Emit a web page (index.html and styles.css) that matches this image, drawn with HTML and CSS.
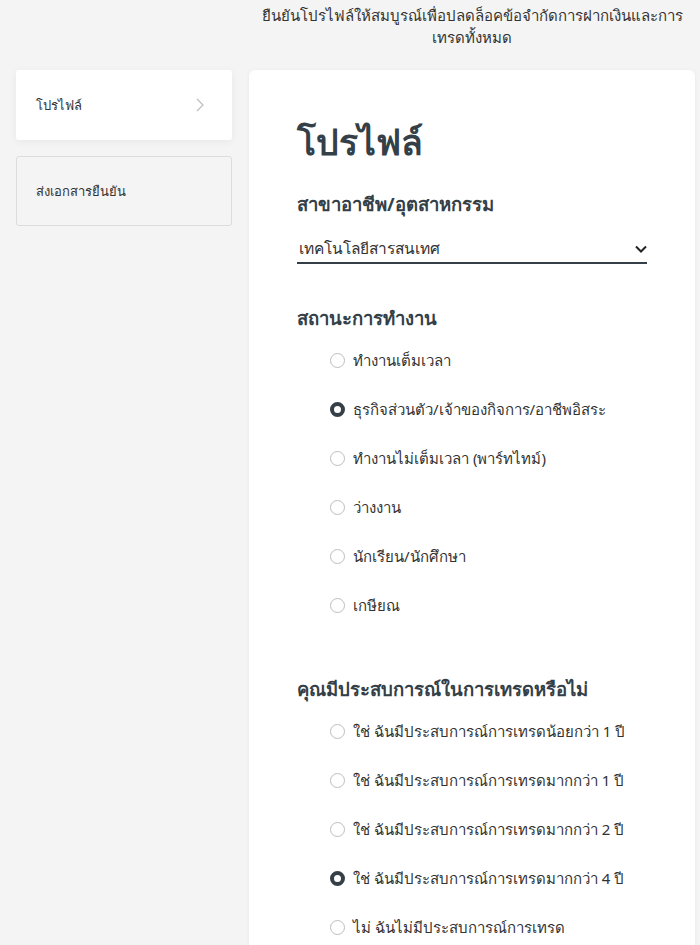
FILE: index.html
```html
<!DOCTYPE html>
<html lang="th">
<head>
<meta charset="utf-8">
<link rel="stylesheet" href="styles.css">
</head>
<body>
<div class="page">
  <div class="top">
    <div class="top-spacer"></div>
    <p class="intro">ยืนยันโปรไฟล์ให้สมบูรณ์เพื่อปลดล็อคข้อจำกัดการฝากเงินและการเทรดทั้งหมด</p>
  </div>
  <div class="layout">
    <nav class="side">
      <div class="side-item active">
        <span>โปรไฟล์</span>
        <svg class="chev" width="8" height="14" viewBox="0 0 8 14"><path d="M1 1l6 6-6 6" fill="none" stroke="#bdbdbd" stroke-width="1.2"/></svg>
      </div>
      <div class="side-item plain"><span>ส่งเอกสารยืนยัน</span></div>
    </nav>
    <main class="card">
      <h1 class="title">โปรไฟล์</h1>
      <h2 class="label">สาขาอาชีพ/อุตสาหกรรม</h2>
      <div class="select">
        <span>เทคโนโลยีสารสนเทศ</span>
        <svg width="12" height="8" viewBox="0 0 12 8"><path d="M1 1.5l5 5 5-5" fill="none" stroke="#222" stroke-width="2"/></svg>
      </div>
      <h2 class="label l2">สถานะการทำงาน</h2>
      <div class="radios">
        <div class="radio"><span class="dot"></span>ทำงานเต็มเวลา</div>
        <div class="radio"><span class="dot on"></span>ธุรกิจส่วนตัว/เจ้าของกิจการ/อาชีพอิสระ</div>
        <div class="radio"><span class="dot"></span>ทำงานไม่เต็มเวลา (พาร์ทไทม์)</div>
        <div class="radio"><span class="dot"></span>ว่างงาน</div>
        <div class="radio"><span class="dot"></span>นักเรียน/นักศึกษา</div>
        <div class="radio"><span class="dot"></span>เกษียณ</div>
      </div>
      <h2 class="label l3">คุณมีประสบการณ์ในการเทรดหรือไม่</h2>
      <div class="radios">
        <div class="radio"><span class="dot"></span>ใช่ ฉันมีประสบการณ์การเทรดน้อยกว่า 1 ปี</div>
        <div class="radio"><span class="dot"></span>ใช่ ฉันมีประสบการณ์การเทรดมากกว่า 1 ปี</div>
        <div class="radio"><span class="dot"></span>ใช่ ฉันมีประสบการณ์การเทรดมากกว่า 2 ปี</div>
        <div class="radio"><span class="dot on"></span>ใช่ ฉันมีประสบการณ์การเทรดมากกว่า 4 ปี</div>
        <div class="radio"><span class="dot"></span>ไม่ ฉันไม่มีประสบการณ์การเทรด</div>
      </div>
    </main>
  </div>
</div>
</body>
</html>
```
FILE: styles.css
```css
html, body { margin: 0; padding: 0; }
body {
  background: #f4f4f4;
  font-family: "Noto Sans", "Liberation Sans", sans-serif;
  color: #333;
  width: 700px;
  height: 945px;
  overflow: hidden;
}
.page { padding: 0 5px 0 16px; }
.top { display: flex; }
.top-spacer { width: 233px; flex: none; }
.intro {
  margin: 4px 0 0;
  flex: 1;
  text-align: center;
  font-size: 15px;
  line-height: 22px;
  color: #333;
}
.layout { display: flex; gap: 17px; margin-top: 22px; align-items: flex-start; }
.side { width: 216px; flex: none; display: flex; flex-direction: column; gap: 16px; }
.side-item {
  height: 70px;
  box-sizing: border-box;
  display: flex;
  align-items: center;
  justify-content: space-between;
  padding: 0 28px 0 20px;
  font-size: 13px;
  color: #333;
  border-radius: 3px;
}
.side-item.active { background: #fff; box-shadow: 0 2px 8px rgba(0,0,0,0.05); }
.side-item.plain { border: 1px solid #dcdcdc; padding-left: 19px; }
.card {
  flex: 1;
  background: #fff;
  border-radius: 6px;
  box-shadow: 0 1px 4px rgba(0,0,0,0.06);
  padding: 40px 48px 0 48px;
  height: 860px;
}
.title { margin: 8px 0 0; font-size: 35.5px; font-weight: 700; color: #343f48; line-height: 46px; }
.label { margin: 27px 0 0; font-size: 18.5px; font-weight: 700; color: #343f48; line-height: 26px; }
.l2 { margin-top: 41px; }
.l3 { margin-top: 59px; }
.select {
  margin-top: 19px;
  border-bottom: 2px solid #343f48;
  display: flex;
  justify-content: space-between;
  align-items: center;
  font-size: 15.5px;
  padding: 0 0 1px 2px;
  width: 348px;
  color: #333;
}
.radios { margin-top: 18px; padding-left: 33px; display: flex; flex-direction: column; gap: 26px; }
.radio { display: flex; align-items: center; gap: 8px; font-size: 15px; line-height: 23px; color: #333; }
.dot {
  width: 15px; height: 15px; box-sizing: border-box;
  border: 1px solid #bdbdbd; border-radius: 50%; flex: none;
}
.dot.on { border: 4.5px solid #343f48; }
```
